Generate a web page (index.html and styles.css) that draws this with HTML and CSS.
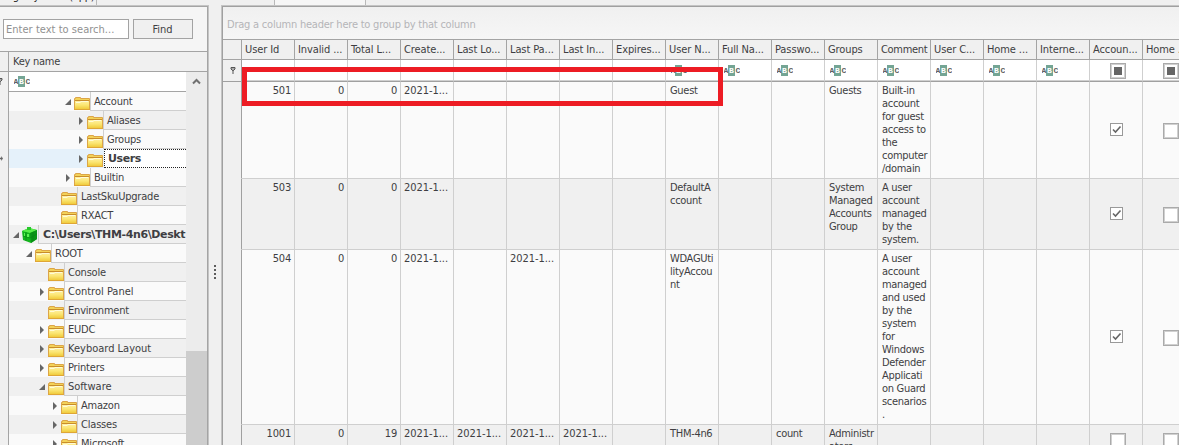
FILE: index.html
```html
<!DOCTYPE html>
<html lang="en">
<head>
<meta charset="utf-8">
<title>Registry Explorer</title>
<link rel="stylesheet" href="styles.css">
</head>
<body>
<svg width="0" height="0" class="defs">
  <defs>
    <linearGradient id="fold" x1="0" y1="0" x2="0" y2="1"><stop offset="0" stop-color="#fff0a0"/><stop offset=".5" stop-color="#fbe673"/><stop offset="1" stop-color="#f0cb3c"/></linearGradient>
    <symbol id="folder" viewBox="0 0 16 14">
      <path d="M.5 13V2.500H1.500V1.500H6.500V2.500H15.500V13z" fill="#f3d257" stroke="#dca548"/>
      <path d="M1 4.500H15" stroke="#c98d2b"/>
      <path d="M1 5H15V13H1z" fill="url(#fold)"/>
      <path d="M2 6.500H6.500M6.500 5.500H14" stroke="#fffbd8" fill="none"/>
      <path d="M0 13.500H16" stroke="#dfa636"/>
    </symbol>
    <symbol id="abc" viewBox="0 0 16 11">
      <rect x="4" width="7" height="11" fill="#74a594"/>
      <g font-family="Liberation Mono, monospace" font-weight="700" font-size="8"><text x="-.6" y="8" fill="#606060">A</text><text x="5.100" y="8" fill="#fff">B</text><text x="11.600" y="8" fill="#606060">C</text></g>
    </symbol>
    <symbol id="pin" viewBox="0 0 6 8"><path d="M1 1.500h4v1.500L3.500 4.500h-1L1 3z" fill="#aaa" stroke="#555"/><path d="M3 4v4" stroke="#555"/></symbol>
    <symbol id="cube" viewBox="0 0 16 16">
      <path d="M0 4 7 1l8 2v9l-6 4-8-3z" fill="#13b51d"/><path d="M0 4 7 1l8 2-7 3z" fill="#59ed48"/><path d="M8 6l7-3v9l-6 4z" fill="#0a9416"/><path d="M4 5v9M1 9l7 2 7-4M11 5v9" stroke="#078410" fill="none" stroke-width=".6"/><path d="M5 0h4v3H5z" fill="#26c92a"/><path d="M2 6h1v3H2zM5 7h2v3H5z" fill="#5cf353"/>
    </symbol>
  </defs>
</svg>
<div class="app">
  <div class="tabs">
    <div class="tab-left"><span>Registry hives (app)</span></div><div class="edge"></div><div class="gap"></div><div class="edge"></div><div class="tab-grid"></div><div class="edge"></div>
  </div>
  <div class="body">
    <section class="hives">
      <div class="search"><div class="field">Enter text to search...</div><div class="button">Find</div></div>
      <div class="key-head"><div class="ind"></div><div class="key-name">Key name</div></div>
      <div class="key-body">
        <div class="ind side"><svg class="side-pin"><use href="#pin"/></svg><div class="current"></div></div>
        <div class="tree">
          <div class="key-filter"><svg class="abc"><use href="#abc"/></svg></div>
          <div class="node d4"><b class="open"></b><svg><use href="#folder"/></svg><span>Account</span></div>
          <div class="node d5"><b class="shut"></b><svg><use href="#folder"/></svg><span>Aliases</span></div>
          <div class="node d5"><b class="shut"></b><svg><use href="#folder"/></svg><span>Groups</span></div>
          <div class="node d5 selected"><b class="shut"></b><svg><use href="#folder"/></svg><span>Users</span></div>
          <div class="node d4"><b class="shut"></b><svg><use href="#folder"/></svg><span>Builtin</span></div>
          <div class="node d3"><b></b><svg><use href="#folder"/></svg><span>LastSkuUpgrade</span></div>
          <div class="node d3"><b></b><svg><use href="#folder"/></svg><span>RXACT</span></div>
          <div class="node d0 hive"><b class="open"></b><svg><use href="#cube"/></svg><span>C:\Users\THM-4n6\Deskt</span></div>
          <div class="node d1"><b class="open"></b><svg><use href="#folder"/></svg><span>ROOT</span></div>
          <div class="node d2"><b></b><svg><use href="#folder"/></svg><span>Console</span></div>
          <div class="node d2"><b class="shut"></b><svg><use href="#folder"/></svg><span class="wide">Control Panel</span></div>
          <div class="node d2"><b></b><svg><use href="#folder"/></svg><span>Environment</span></div>
          <div class="node d2"><b class="shut"></b><svg><use href="#folder"/></svg><span>EUDC</span></div>
          <div class="node d2"><b class="shut"></b><svg><use href="#folder"/></svg><span class="wide">Keyboard Layout</span></div>
          <div class="node d2"><b class="shut"></b><svg><use href="#folder"/></svg><span>Printers</span></div>
          <div class="node d2"><b class="open"></b><svg><use href="#folder"/></svg><span class="wide">Software</span></div>
          <div class="node d3"><b class="shut"></b><svg><use href="#folder"/></svg><span>Amazon</span></div>
          <div class="node d3"><b class="shut"></b><svg><use href="#folder"/></svg><span>Classes</span></div>
          <div class="node d3"><b class="shut"></b><svg><use href="#folder"/></svg><span>Microsoft</span></div>
        </div>
        <div class="scroll"><svg class="up" viewBox="0 0 9 7"><path d="M1 5.500 4.500 2 8 5.500" fill="none" stroke="#707070" stroke-width="2"/></svg><div class="thumb"></div></div>
      </div>
    </section>
    <div class="splitter"><i></i><i></i><i></i><i></i></div>
    <section class="grid">
      <div class="group">Drag a column header here to group by that column</div>
      <table>
        <colgroup><col class="c-ind"><col span="18" class="c"></colgroup>
        <tr class="head"><th></th><th>User Id</th><th>Invalid ...</th><th>Total L...</th><th>Create...</th><th>Last Lo...</th><th>Last Pa...</th><th>Last In...</th><th>Expires...</th><th>User N...</th><th>Full Na...</th><th>Passwo...</th><th>Groups</th><th>Comment</th><th>User C...</th><th>Home ...</th><th>Interne...</th><th>Accoun...</th><th>Home ...</th></tr>
        <tr class="filter"><td><svg class="pin"><use href="#pin"/></svg></td><td></td><td></td><td></td><td></td><td></td><td></td><td></td><td></td><td><svg class="abc"><use href="#abc"/></svg></td><td><svg class="abc"><use href="#abc"/></svg></td><td><svg class="abc"><use href="#abc"/></svg></td><td><svg class="abc"><use href="#abc"/></svg></td><td><svg class="abc"><use href="#abc"/></svg></td><td><svg class="abc"><use href="#abc"/></svg></td><td><svg class="abc"><use href="#abc"/></svg></td><td><svg class="abc"><use href="#abc"/></svg></td><td><div class="box mixed"></div></td><td><div class="box mixed"></div></td></tr>
        <tr class="row r1"><td></td><td class="n">501</td><td class="n">0</td><td class="n">0</td><td class="d">2021-1...</td><td></td><td></td><td></td><td></td><td>Guest</td><td></td><td></td><td>Guests</td><td>Built-in<br>account<br>for guest<br>access to<br>the<br>computer<br>/domain</td><td></td><td></td><td></td><td class="k"><div class="box on"><svg viewBox="0 0 13 13"><path d="M3 6.500 5.500 9 10.500 3.500"/></svg></div></td><td class="k"><div class="box"></div></td></tr>
        <tr class="row alt r2"><td></td><td class="n">503</td><td class="n">0</td><td class="n">0</td><td class="d">2021-1...</td><td></td><td></td><td></td><td></td><td>DefaultA<br>ccount</td><td></td><td></td><td>System<br>Managed<br>Accounts<br>Group</td><td>A user<br>account<br>managed<br>by the<br>system.</td><td></td><td></td><td></td><td class="k"><div class="box on"><svg viewBox="0 0 13 13"><path d="M3 6.500 5.500 9 10.500 3.500"/></svg></div></td><td class="k"><div class="box"></div></td></tr>
        <tr class="row r3"><td></td><td class="n">504</td><td class="n">0</td><td class="n">0</td><td class="d">2021-1...</td><td></td><td class="d">2021-1...</td><td></td><td></td><td>WDAGUti<br>lityAccou<br>nt</td><td></td><td></td><td></td><td>A user<br>account<br>managed<br>and used<br>by the<br>system<br>for<br>Windows<br>Defender<br>Applicati<br>on Guard<br>scenarios<br>.</td><td></td><td></td><td></td><td class="k"><div class="box on"><svg viewBox="0 0 13 13"><path d="M3 6.500 5.500 9 10.500 3.500"/></svg></div></td><td class="k"><div class="box"></div></td></tr>
        <tr class="row alt r4"><td></td><td class="n">1001</td><td class="n">0</td><td class="n">19</td><td class="d">2021-1...</td><td class="d">2021-1...</td><td class="d">2021-1...</td><td class="d">2021-1...</td><td></td><td>THM-4n6</td><td></td><td>count</td><td>Administr<br>ators</td><td></td><td></td><td></td><td></td><td class="k"><div class="box"></div></td><td class="k"><div class="box"></div></td></tr>
      </table>
      <div class="mark"></div>
    </section>
  </div>
</div>
</body>
</html>
```
FILE: styles.css
```css
* { box-sizing: border-box; }
html, body { margin: 0; height: 445px; overflow: hidden; }
body { background: #f0f0f0; color: #3e3e42; font: 11px/13px "DejaVu Sans Condensed", "Noto Sans", sans-serif; letter-spacing: -.3px; white-space: nowrap; }
.defs { position: absolute; }
.app { width: 1179px; height: 445px; overflow: hidden; display: flex; flex-direction: column; }
.tabs { display: flex; height: 5px; flex: none; }
.tab-left { width: 96px; height: 5px; overflow: hidden; color: #222; display: flex; align-items: flex-end; }
.tab-left span { margin: 0 0 2px 1px; }
.edge { width: 1px; background: #b9b9b9; }
.gap { width: 177px; }
.tab-grid { width: 90px; background: #f6f6f6; }
.body { display: flex; height: 440px; }

/* registry tree panel */
.hives { width: 209px; flex: none; border-right: 1px solid #c4c4c4; border-top: 1px solid #c4c4c4; box-shadow: inset 0 1px #a4a4a4, inset -1px 0 #a4a4a4; padding: 1px 1px 0 0; display: flex; flex-direction: column; }
.search { display: flex; height: 44px; flex: none; background: #f5f5f5; padding: 12px 0 0 3px; gap: 4px; }
.field, .button { height: 20px; border: 1px solid #a3a3a3; line-height: 19px; }
.field { width: 126px; background: #fff; color: #919191; padding-left: 2px; letter-spacing: .03px; }
.button { width: 60px; background: #f0f0f0; text-align: center; padding-right: 1px; letter-spacing: 0; }
.key-head { display: flex; height: 21px; flex: none; border: solid #a4a4a4; border-width: 1px 0; }
.ind { width: 9px; flex: none; border-right: 1px solid #a4a4a4; overflow: hidden; }
.key-name { padding: 3px 0 0 4px; letter-spacing: -.25px; }
.key-body { display: flex; flex: 1; min-height: 0; }
.side { display: flex; flex-direction: column; }
.side-pin { width: 6px; height: 8px; margin: 5px 0 0 -3px; }
.current { width: 3px; height: 5px; margin-top: 71px; background: #666; clip-path: polygon(0 35%, 40% 35%, 40% 0, 100% 50%, 40% 100%, 40% 65%, 0 65%); }
.tree { width: 177px; overflow: hidden; letter-spacing: -.2px; }
.key-filter { height: 20px; background: #fff; border-bottom: 1px solid #a4a4a4; padding: 4px 0 0 5px; }
.abc { display: block; width: 16px; height: 11px; }
.node { height: 19px; display: flex; background: #fafafa; }
.node:nth-child(odd) { background: #f0f0f0; }
.node b { width: 10px; flex: none; }
.node svg { width: 16px; height: 14px; margin: 4px 0 0; flex: none; }
.node span { flex: 1; border: solid #cfcfcf; border-width: 0 0 1px 1px; padding: 3px 0 0 3px; }
.node .wide { letter-spacing: 0; }
.node b::before { content: ""; display: block; width: 0; height: 0; }
.node .shut::before { margin: 6px 0 0 2px; border: solid transparent; border-width: 4px 0 4px 4px; border-left-color: #666; }
.node .open::before { margin: 7px 0 0 1px; width: 6px; height: 6px; background: #666; clip-path: polygon(100% 0, 100% 100%, 0 100%); }
.d0 { padding-left: 4px; } .d0 b { width: 9px; }
.node.d0 .open::before { margin-left: 0; }
.d1 { padding-left: 16px; } .d2 { padding-left: 29px; } .d3 { padding-left: 42px; } .d4 { padding-left: 55px; } .d5 { padding-left: 68px; }
.hive svg { height: 16px; margin-top: 2px; }
.hive span, .selected span { font-family: "DejaVu Sans", sans-serif; font-weight: 700; letter-spacing: -.38px; }
.hive span { padding-left: 4px; overflow: hidden; }
.node.selected { background: #e5f1fa; }
.selected span { background: #fff; border: 1px dotted #222; border-right: 0; padding-top: 2px; margin-left: 1px; }
.scroll { width: 21px; background: #ececec; display: flex; flex-direction: column; align-items: center; }
.up { width: 9px; height: 7px; margin-top: 6px; }
.thumb { width: 21px; height: 94px; margin-top: 266px; background: #cdcdcd; flex: none; }

.splitter { width: 12px; flex: none; display: flex; flex-direction: column; align-items: center; gap: 2px; padding-top: 260px; }
.splitter i { width: 2px; height: 2px; background: #5c5c5c; flex: none; }

/* users data grid */
.grid { width: 958px; flex: none; border: solid #c4c4c4; border-width: 1px 0 0 1px; box-shadow: inset 1px 1px #a0a0a0; padding: 1px 0 0 1px; position: relative; overflow: hidden; }
.group { height: 32px; padding: 11px 0 0 4px; color: #b5b5b8; background: linear-gradient(#f0f0f0, #f6f6f6); letter-spacing: -.22px; }
table { border-collapse: separate; border-spacing: 0; table-layout: fixed; width: 973px; }
.c-ind { width: 19px; } .c { width: 53px; }
th, td { padding: 0; vertical-align: top; text-align: left; font-weight: 400; overflow: hidden; }
.head th { height: 21px; border: solid #a4a4a4; border-width: 1px 1px 1px 0; padding: 3px 0 0 3px; background: #f0f0f0; letter-spacing: -.1px; }
.head th:nth-child(14) { letter-spacing: -.3px; }
.filter td { height: 22px; background: #fff; border-right: 1px solid #cfcfcf; border-bottom: 1px solid #a0a0a0; box-shadow: inset 0 -1px #d0d0d0; padding: 5px 0 0 5px; }
.filter td:first-child, .row td:first-child { background: #f0f0f0; border-right-color: #a0a0a0; box-shadow: none; border-bottom-color: #a0a0a0; }
.filter .pin { display: block; width: 6px; height: 8px; margin: 1px 0 0 2px; }
.row td { background: #fafafa; border: solid #cfcfcf; border-width: 0 1px 1px 0; padding: 2px 0 0 4px; }
.row.alt td { background: #f0f0f0; }
.row td:first-child, .row.alt td:first-child { border-bottom-color: #f0f0f0; background: #f0f0f0; }
.r1 { height: 97px; } .r2 { height: 71px; } .r3 { height: 175px; } .r4 { height: 31px; }
.row .n { text-align: right; padding-right: 3px; letter-spacing: -.2px; }
.row .d { padding-left: 3px; letter-spacing: -.05px; }
.row .k { vertical-align: middle; padding: 2px 0 0 20px; }
.box { width: 16px; height: 16px; background: #fff; border: 1px solid #aaa; box-shadow: inset 0 0 0 1px #d0d0d0; }
.filter .box { margin: -2px 0 0 15px; padding: 3px; }
.mixed::before { content: ""; display: block; width: 8px; height: 8px; background: #666; }
.box.on { width: 13px; height: 13px; margin-bottom: 3px; border-color: #999; box-shadow: none; }
.on svg { display: block; width: 13px; height: 13px; margin: -1px; }
.on path { fill: none; stroke: #666; stroke-width: 1.600; }
.mark { position: absolute; left: 20px; top: 61px; width: 481px; height: 39px; border: 5px solid #ed1c24; }
```
